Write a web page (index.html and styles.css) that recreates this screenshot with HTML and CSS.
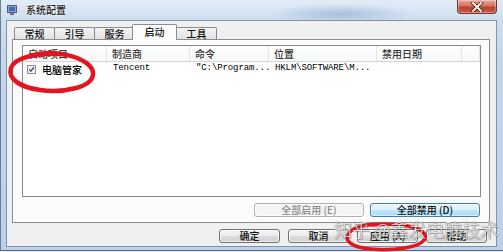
FILE: index.html
```html
<!DOCTYPE html>
<html lang="zh-CN">

<head>
    <meta charset="UTF-8">
    <meta name="viewport" content="width=device-width, initial-scale=1.0">
    <title>系统配置</title>
    <link rel="stylesheet" href="styles.css">
</head>

<body>
    <div class="window">
        <div class="titlebar">
            <svg class="app-icon" width="10" height="10" viewBox="0 0 10 10">
                <rect x="0.5" y="0.5" width="9" height="7" fill="#9aa6b4" stroke="#56606c" stroke-width="1"/>
                <rect x="2" y="2" width="6" height="4" fill="#2f6fd0"/>
                <rect x="3" y="8" width="4" height="2" fill="#6a7480"/>
            </svg>
            <span class="title">系统配置</span>
            <div class="close-btn">
                <svg width="14" height="10" viewBox="0 0 14 10">
                    <path d="M3 1 L11 9 M11 1 L3 9" stroke="#5b1c14" stroke-width="3.4" stroke-linecap="square"/>
                    <path d="M3 1 L11 9 M11 1 L3 9" stroke="#fff" stroke-width="1.8" stroke-linecap="square"/>
                </svg>
            </div>
        </div>

        <div class="client">
            <div class="tabs">
                <div class="tab">常规</div>
                <div class="tab">引导</div>
                <div class="tab">服务</div>
                <div class="tab active">启动</div>
                <div class="tab">工具</div>
            </div>

            <div class="panel">
                <div class="listview">
                    <div class="lv-head">
                        <div class="col c1">启动项目</div>
                        <div class="col c2">制造商</div>
                        <div class="col c3">命令</div>
                        <div class="col c4">位置</div>
                        <div class="col c5">禁用日期</div>
                        <div class="col c6"></div>
                    </div>
                    <div class="lv-row">
                        <div class="col c1">
                            <svg class="check" width="9" height="9" viewBox="0 0 9 9">
                                <rect x="0.5" y="0.5" width="8" height="8" fill="#f4f4f4" stroke="#8e8f8f"/>
                                <path d="M2.2 4.4 L3.8 6.2 L6.9 2.3" fill="none" stroke="#3b4f8f" stroke-width="1.4"/>
                            </svg>
                            <span>电脑管家</span>
                        </div>
                        <div class="col c2 mono">Tencent</div>
                        <div class="col c3 mono">"C:\Program...</div>
                        <div class="col c4 mono">HKLM\SOFTWARE\M...</div>
                        <div class="col c5"></div>
                    </div>
                </div>

                <div class="panel-buttons">
                    <div class="btn disabled wide">全部启用 (E)</div>
                    <div class="btn focused wide">全部禁用 (D)</div>
                </div>
            </div>

            <div class="dialog-buttons">
                <div class="btn">确定</div>
                <div class="btn">取消</div>
                <div class="btn">应用 (A)</div>
                <div class="btn">帮助</div>
            </div>
        </div>
    </div>

    <!-- red marks drawn over the screenshot -->
    <svg class="marks" width="503" height="252" viewBox="0 0 503 252">
        <path d="M30 56 C55 48 92 58 93 73 C94 88 62 93 40 90 C18 87 8 78 11 68 C14 58 35 53 58 54"
              fill="none" stroke="#e3161f" stroke-width="4.5" stroke-linecap="round"/>
        <path d="M372 225 C405 222 428 229 425 238 C422 248 392 251 370 249 C350 247 344 240 349 233 C354 226 368 224 385 224"
              fill="none" stroke="#e3161f" stroke-width="3.5" stroke-linecap="round"/>
    </svg>

    <div class="watermark">知乎 @鑫发电脑技术</div>
</body>
</html>
```

FILE: styles.css
```css
* {
    box-sizing: border-box;
}

body {
    margin: 0;
    width: 503px;
    height: 252px;
    overflow: hidden;
    position: relative;
    background-color: #e4eaf1;
    font-family: "Noto Sans CJK SC", "Liberation Sans", sans-serif;
    font-size: 10px;
    font-weight: 500;
    color: #000;
}

.window {
    height: 251px;
    display: flex;
    flex-direction: column;
    padding: 0 6px 3px 5px;
    border-left: 1px solid #6c7f96;
    border-bottom: 1px solid #56677c;
    background:
        radial-gradient(ellipse 70px 10px at 340px 14px, rgba(120, 150, 190, 0.45), rgba(120, 150, 190, 0)),
        linear-gradient(to bottom, #e2ecf7 0, #cfdfef 18px, #c3d6ec 60px, #bcd1e9 100%);
}

.titlebar {
    height: 20px;
    display: flex;
    align-items: center;
    padding-left: 1px;
}

.app-icon {
    margin-top: -1px;
}

.title {
    margin-left: 9px;
    line-height: 12px;
    color: #1b1b1b;
    text-shadow: 0 0 3px #fff, 0 0 2px #fff;
}

.close-btn {
    margin-left: auto;
    align-self: flex-start;
    width: 40px;
    height: 14px;
    display: flex;
    align-items: center;
    justify-content: center;
    border: 1px solid #6e3a34;
    border-top: none;
    border-radius: 0 0 4px 4px;
    background: linear-gradient(to bottom, #e6a99c 0, #d27563 45%, #bb4030 55%, #c85a45 100%);
    box-shadow: inset 0 0 0 1px rgba(255, 255, 255, 0.35);
}

.client {
    flex: 1;
    display: flex;
    flex-direction: column;
    padding: 3px 6px 0 5px;
    background-color: #f0f0f0;
    border: 1px solid #8193a9;
}

/* tabs */
.tabs {
    height: 15px;
    display: flex;
    align-items: flex-end;
    padding-left: 2px;
}

.tab {
    height: 12px;
    line-height: 11px;
    padding: 0 9.5px;
    margin-right: -1px;
    border: 1px solid #898c95;
    border-bottom: none;
    border-radius: 2px 2px 0 0;
    background: linear-gradient(to bottom, #f3f3f3, #e3e3e3);
    color: #111;
}

.tab.active {
    height: 16px;
    line-height: 14px;
    padding: 0 11.5px;
    margin: 0 -1px -1px -2px;
    position: relative;
    z-index: 1;
    background: #fcfcfc;
}

.panel {
    height: 184px;
    padding: 5px 8px 5px 9px;
    border: 1px solid #898c95;
    background-color: #fcfcfc;
}

/* list view */
.listview {
    height: 152px;
    border: 1px solid #828790;
    background-color: #fff;
}

.lv-head {
    height: 16px;
    display: flex;
    border-bottom: 1px solid #d5d5d5;
    background: linear-gradient(to bottom, #fff, #f6f7f9);
}

.lv-head .col {
    line-height: 15px;
    border-right: 1px solid #e2e6eb;
    color: #333;
}

.lv-row {
    height: 14px;
    display: flex;
}

.col {
    padding-left: 5px;
    white-space: nowrap;
    overflow: hidden;
    line-height: 13px;
}

.c1 { width: 84px; }
.c2 { width: 83px; }
.c3 { width: 79px; }
.c4 { width: 108px; }
.c5 { width: 85px; }
.c6 { flex: 1; }

.lv-row .c1 {
    display: flex;
    align-items: center;
    padding-left: 4px;
}

.check {
    margin-right: 6px;
}

.mono {
    font-family: "Liberation Mono", "DejaVu Sans Mono", monospace;
    font-size: 9px;
    font-weight: normal;
    letter-spacing: -0.1px;
    padding-left: 6px;
    color: #000;
}

/* buttons */
.panel-buttons {
    display: flex;
    justify-content: flex-end;
    gap: 6px;
    margin-top: 6px;
    padding-right: 1px;
}

.dialog-buttons {
    display: flex;
    justify-content: flex-end;
    gap: 8px;
    margin-top: 6px;
    padding-right: 3px;
}

.btn {
    width: 61px;
    height: 14px;
    line-height: 12px;
    text-align: center;
    border: 1px solid #707070;
    border-radius: 3px;
    background: linear-gradient(to bottom, #f2f2f2 0, #ebebeb 50%, #dddddd 51%, #cfcfcf 100%);
    box-shadow: inset 0 0 0 1px rgba(255, 255, 255, 0.7);
    color: #111;
}

.btn.wide {
    width: 110px;
}

.btn.disabled {
    border-color: #adb2b5;
    background: #f4f4f4;
    color: #8a8a8a;
}

.btn.focused {
    border-color: #3c7fb1;
    background: linear-gradient(to bottom, #eaf6fd 0, #d9f0fc 50%, #bee6fd 51%, #a7d9f5 100%);
    box-shadow: inset 0 0 0 1px rgba(255, 255, 255, 0.6);
}

/* overlays on top of the screenshot */
.marks {
    position: absolute;
    left: 0;
    top: 0;
}

.watermark {
    position: absolute;
    left: 334px;
    top: 218px;
    font-size: 18px;
    font-weight: 300;
    line-height: 22px;
    white-space: nowrap;
    color: rgba(255, 255, 255, 0.92);
    text-shadow: 0 0 1px #444, 1px 1px 1px rgba(0, 0, 0, 0.35);
}
```
